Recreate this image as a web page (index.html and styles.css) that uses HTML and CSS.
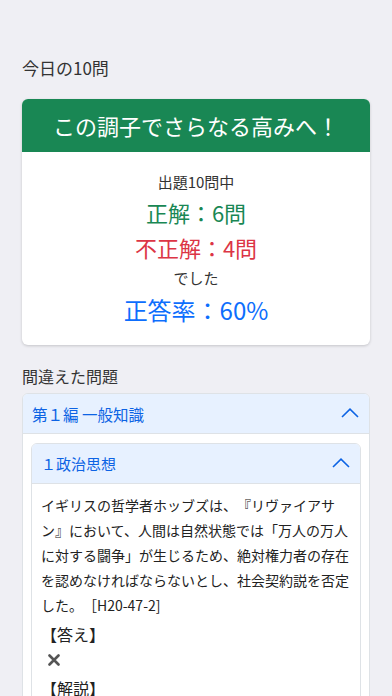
FILE: index.html
```html
<!DOCTYPE html>
<html lang="ja">
<head>
<meta charset="utf-8">
<link rel="stylesheet" href="styles.css">
</head>
<body>
<main class="page">
  <h2 class="section-title today">今日の10問</h2>
  <section class="result-card">
    <div class="result-head">この調子でさらなる高みへ！</div>
    <div class="result-body">
      <div class="line small">出題10問中</div>
      <div class="line correct">正解：6問</div>
      <div class="line wrong">不正解：4問</div>
      <div class="line small deshita">でした</div>
      <div class="line rate">正答率：60%</div>
    </div>
  </section>

  <h2 class="section-title missed">間違えた問題</h2>
  <section class="accordion">
    <div class="acc-head">
      <span>第１編 一般知識</span>
      <svg class="chev" width="18" height="10" viewBox="0 0 18 10"><path d="M1 9 L9 1.2 L17 9" fill="none" stroke="currentColor" stroke-width="1.6"/></svg>
    </div>
    <div class="acc-body">
      <div class="accordion inner">
        <div class="acc-head">
          <span>１政治思想</span>
          <svg class="chev" width="18" height="10" viewBox="0 0 18 10"><path d="M1 9 L9 1.2 L17 9" fill="none" stroke="currentColor" stroke-width="1.6"/></svg>
        </div>
        <div class="q-body">
          <p class="question">イギリスの哲学者ホッブズは、『リヴァイアサン』において、人間は自然状態では「万人の万人に対する闘争」が生じるため、絶対権力者の存在を認めなければならないとし、社会契約説を否定した。［H20-47-2]</p>
          <div class="label">【答え】</div>
          <div class="mark"><svg width="12" height="12" viewBox="0 0 12 12"><path d="M1.5 1.5 L10.5 10.5 M10.5 1.5 L1.5 10.5" stroke="currentColor" stroke-width="2.6" stroke-linecap="round"/></svg></div>
          <div class="label">【解説】</div>
        </div>
      </div>
    </div>
  </section>
</main>
</body>
</html>
```
FILE: styles.css
```css
* { box-sizing: border-box; }
html, body { margin: 0; padding: 0; }
body {
  background: #efeff4;
  font-family: "Noto Sans CJK JP", "Noto Sans", sans-serif;
  color: #212529;
  height: 696px;
  overflow: hidden;
  text-spacing-trim: space-all;
}
.page { padding: 56px 22px 0; }
.section-title {
  margin: 0;
  font-weight: 400;
  color: #333;
}
.today { font-size: 17px; line-height: 24px; }
.missed { font-size: 16px; line-height: 24px; margin-top: 19px; margin-bottom: 5px; }

.result-card {
  margin-top: 19px;
  background: #fff;
  border-radius: 6px;
  overflow: hidden;
  box-shadow: 0 1px 3px rgba(0,0,0,0.18);
}
.result-head {
  background: #198754;
  color: #fff;
  text-align: center;
  font-size: 22px;
  height: 53px;
  line-height: 53px;
}
.result-body {
  padding: 18px 0 17px;
  text-align: center;
}
.line { white-space: nowrap; }
.small { font-size: 15px; line-height: 24px; color: #333; }
.deshita { line-height: 28px; }
.correct { font-size: 22px; line-height: 36px; color: #198754; }
.wrong { font-size: 22px; line-height: 34px; color: #dc3545; }
.rate { font-size: 24px; line-height: 36px; color: #0d6efd; }

.accordion {
  background: #fff;
  border: 1px solid #dee2e6;
  border-radius: 6px;
  overflow: hidden;
}
.acc-head {
  display: flex;
  align-items: center;
  justify-content: space-between;
  height: 40px;
  padding: 0 10px 0 9px;
  background: #e7f1ff;
  color: #0c63e4;
  font-size: 15.5px;
  border-bottom: 1px solid #dee2e6;
}
.chev { color: #0c63e4; display: block; margin-top: -2px; }
.acc-body { padding: 9px 8px 0; }
.inner .acc-head { font-size: 15px; }
.q-body { padding: 9px 9px 0; }
.question {
  margin: 0;
  font-size: 14px;
  line-height: 25px;
  color: #222;
}
.label { font-size: 16px; line-height: 25px; margin-top: 4px; color: #222; }
.mark { height: 25px; display: flex; align-items: center; color: #555; padding-left: 7px; }
.mark svg { display: block; }
```
